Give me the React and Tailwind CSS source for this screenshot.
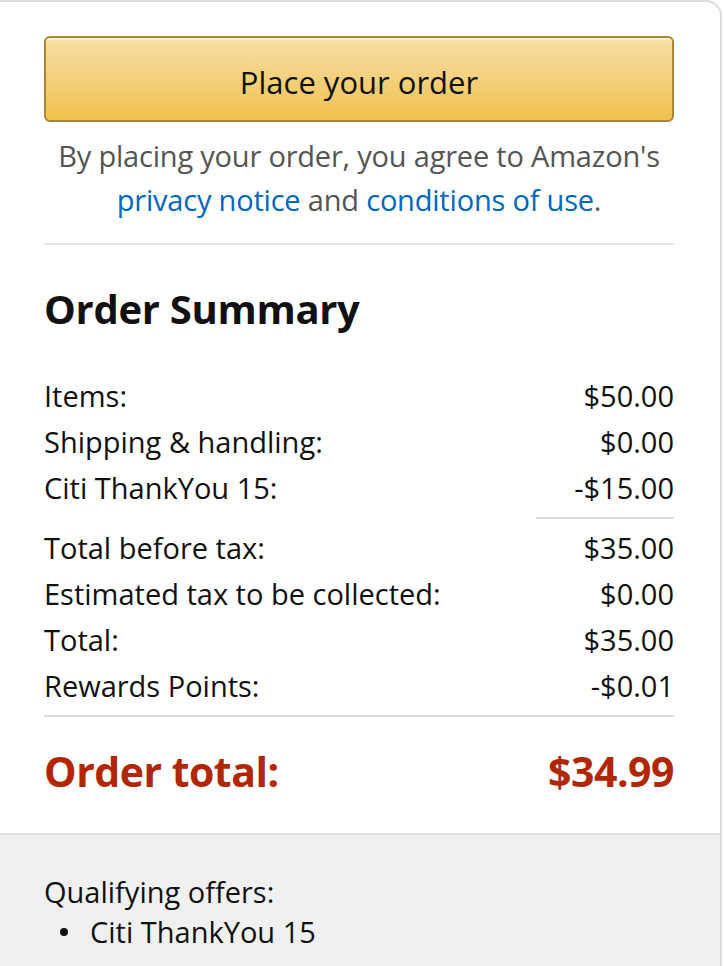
const rows1 = [
  ["Items:", "$50.00"],
  ["Shipping & handling:", "$0.00"],
  ["Citi ThankYou 15:", "-$15.00"],
]

const rows2 = [
  ["Total before tax:", "$35.00"],
  ["Estimated tax to be collected:", "$0.00"],
  ["Total:", "$35.00"],
  ["Rewards Points:", "-$0.01"],
]

function Row({ label, value }) {
  return (
    <div className="flex h-[46px] items-center justify-between">
      <span>{label}</span>
      <span>{value}</span>
    </div>
  )
}

export default function App() {
  return (
    <div className="min-h-[966px] bg-white font-['Open_Sans',sans-serif] text-[#111]">
      <div className="-ml-[2px] w-[724px] overflow-hidden rounded-tr-[16px] border-2 border-[#dddddd]">
        <div className="pl-[44px] pr-[46px] pt-[34px]">
          <button
            type="button"
            className="flex h-[86px] w-full items-center justify-center rounded-[6px] border-2 border-[#a88734] bg-gradient-to-b from-[#f7dfa5] to-[#f0c14b] pt-[6px] text-[31px] text-[#111] shadow-[inset_0_2px_0_rgba(255,255,255,0.5)]"
          >
            Place your order
          </button>
          <p className="mt-[12px] text-center text-[29px] leading-[44px] tracking-[-0.2px] text-[#555]">
            By placing your order, you agree to Amazon's{" "}
            <a className="text-[#0066c0]">privacy notice</a> and{" "}
            <a className="text-[#0066c0]">conditions of use</a>.
          </p>
          <div className="mt-[21px] h-[2px] bg-[#e7e7e7]" />

          <h3 className="mt-[40px] text-[40px] font-bold leading-[48px] tracking-[-0.3px]">Order Summary</h3>

          <div className="mt-[40px] text-[29px]">
            {rows1.map(([l, v]) => (
              <Row key={l} label={l} value={v} />
            ))}
            <div className="my-[6px] ml-auto h-[2px] w-[138px] bg-[#dddddd]" />
            {rows2.map(([l, v]) => (
              <Row key={l} label={l} value={v} />
            ))}
          </div>
          <div className="mt-[6px] h-[2px] bg-[#dddddd]" />

          <div className="flex h-[116px] items-center justify-between pb-[6px] text-[41px] font-bold tracking-[-0.5px] text-[#b12704]">
            <span>Order total:</span>
            <span>$34.99</span>
          </div>
        </div>

        <div className="border-t-2 border-[#dddddd] bg-[#f0f0f0] pl-[44px] pr-[46px] pt-[37px] pb-[40px] text-[29px] leading-[40px]">
          <p>Qualifying offers:</p>
          <ul>
            <li className="flex items-center">
              <span className="ml-[16px] mr-[22px] h-[8px] w-[8px] rounded-full bg-[#111]" />
              Citi ThankYou 15
            </li>
          </ul>
        </div>
      </div>
    </div>
  )
}
